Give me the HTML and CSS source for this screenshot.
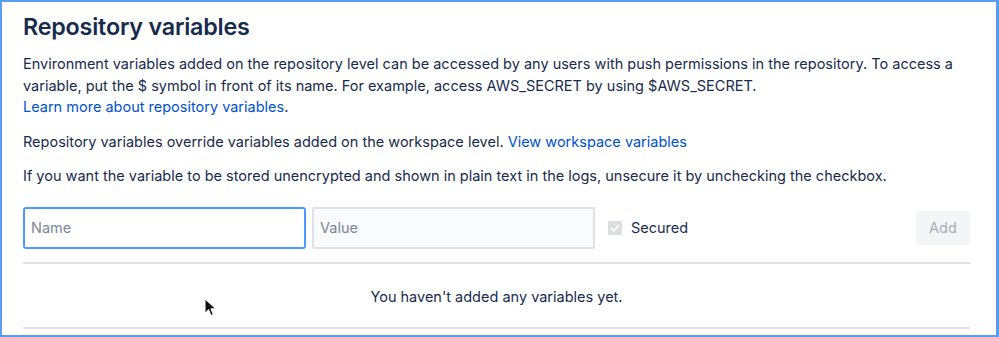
FILE: index.html
```html
<!DOCTYPE html>
<html lang="en">
<head>
    <meta charset="UTF-8">
    <title>Repository variables</title>
    <link rel="stylesheet" href="styles.css">
</head>
<body>
    <div class="frame">
        <h1>Repository variables</h1>
        <p>Environment variables added on the repository level can be accessed by any users with push permissions in the repository. To access a variable, put the $ symbol in front of its name. For example, access AWS_SECRET by using $AWS_SECRET.<br>
            <a href="#">Learn more about repository variables</a>.</p>
        <p>Repository variables override variables added on the workspace level. <a href="#">View workspace variables</a></p>
        <p>If you want the variable to be stored unencrypted and shown in plain text in the logs, unsecure it by unchecking the checkbox.</p>

        <form class="var-form" onsubmit="return false;">
            <input class="field focused" type="text" placeholder="Name">
            <input class="field" type="text" placeholder="Value">
            <label class="secured">
                <span class="check">
                    <svg width="10" height="8" viewBox="0 0 10 8"><path d="M1 4.2 L3.8 6.8 L9 1.2" fill="none" stroke="#fff" stroke-width="1.8"/></svg>
                </span>
                Secured
            </label>
            <button class="add" type="submit" disabled>Add</button>
        </form>

        <div class="empty">You haven't added any variables yet.</div>

        <svg class="cursor" width="14" height="20" viewBox="0 0 14 20">
            <path d="M1 1 L1 15 L4.5 11.6 L7 17.5 L9.3 16.5 L6.9 10.8 L11.8 10.8 Z" fill="#111" stroke="#fff" stroke-width="1"/>
        </svg>
    </div>
</body>
</html>
```

FILE: styles.css
```css
:root {
    --text-color: #172b4d;
    --link-color: #0052cc;
    --frame-color: #5c9cf5;
    --line-color: #dfe1e6;
}

body {
    margin: 0;
    font-family: Inter, 'Noto Sans', sans-serif;
    color: var(--text-color);
    background-color: white;
}

.frame {
    position: relative;
    box-sizing: border-box;
    height: 337px;
    border: solid var(--frame-color);
    border-width: 2px 3px 2px 2px;
    padding: 9px 26px 0 21px;
    overflow: hidden;
}

h1 {
    font-size: 23.3px;
    font-weight: 600;
    margin: 0 0 10px;
    line-height: 32px;
    letter-spacing: -0.2px;
}

p {
    font-size: 14.5px;
    line-height: 21.5px;
    margin: 0 0 13px;
}

a {
    color: var(--link-color);
    text-decoration: none;
}

.var-form {
    display: flex;
    align-items: center;
    gap: 6px;
    margin-top: 20px;
    padding-bottom: 13px;
    border-bottom: 2px solid var(--line-color);
}

.field {
    box-sizing: border-box;
    width: 283px;
    height: 42px;
    padding: 0 6px;
    font-family: inherit;
    font-size: 14.5px;
    color: var(--text-color);
    background-color: #fafbfc;
    border: 2px solid var(--line-color);
    border-radius: 3px;
    outline: none;
}

.field::placeholder {
    color: #7a869a;
}

.field.focused {
    background-color: white;
    border-color: #4c9aff;
}

.secured {
    display: flex;
    align-items: center;
    gap: 9px;
    margin-left: 7px;
    font-size: 14.5px;
}

.check {
    display: flex;
    align-items: center;
    justify-content: center;
    width: 14px;
    height: 14px;
    border-radius: 2px;
    background-color: #dcdde1;
}

.add {
    margin-left: auto;
    width: 54px;
    height: 34px;
    font-family: inherit;
    font-size: 14.5px;
    color: #a5adba;
    background-color: #f4f5f7;
    border: none;
    border-radius: 3px;
}

.empty {
    text-align: center;
    font-size: 14.5px;
    line-height: 21px;
    padding: 22px 0 20px;
    border-bottom: 2px solid var(--line-color);
}

.cursor {
    position: absolute;
    left: 202px;
    top: 296px;
}
```
